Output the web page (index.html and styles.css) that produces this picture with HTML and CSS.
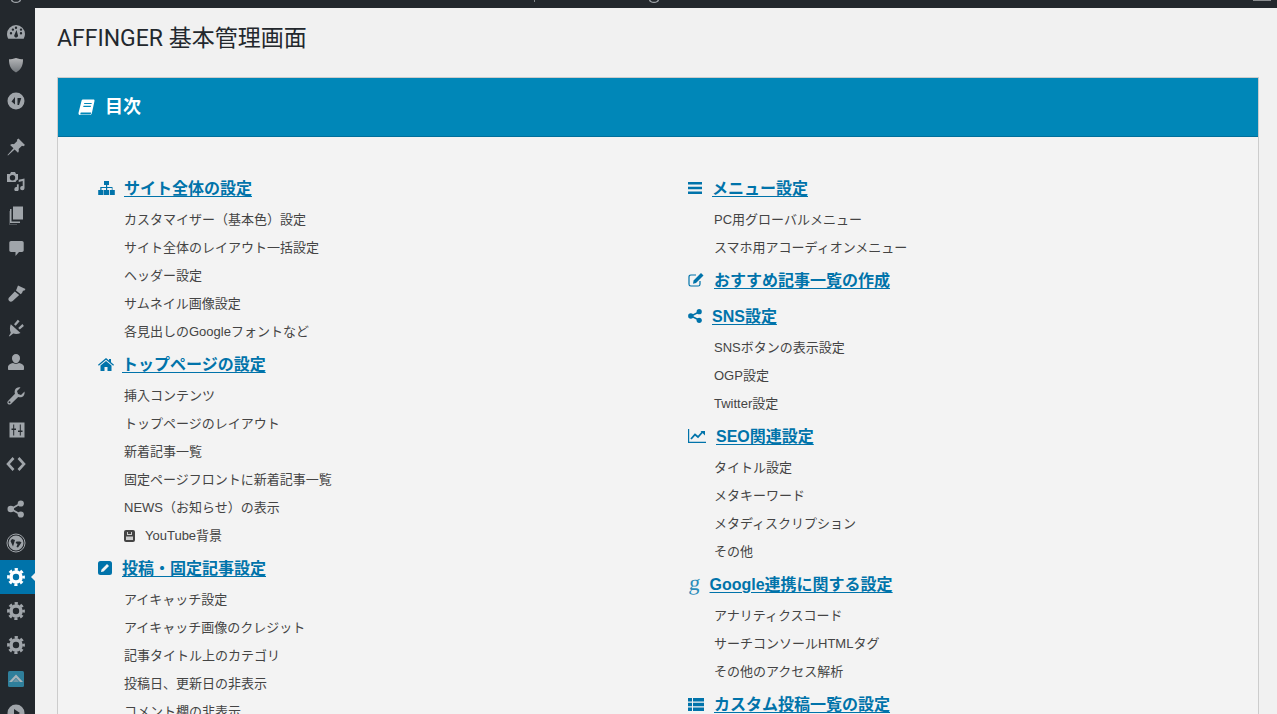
FILE: index.html
```html
<!DOCTYPE html>
<html lang="ja">
<head>
<meta charset="utf-8">
<title>AFFINGER 基本管理画面</title>
<link rel="stylesheet" href="styles.css">
</head>
<body>
<svg class="defs" width="0" height="0" aria-hidden="true">
  <symbol id="gear" viewBox="0 0 20 20">
    <circle cx="10" cy="10" r="5" fill="none" stroke="currentColor" stroke-width="3.6"/>
    <circle cx="10" cy="10" r="7.6" fill="none" stroke="currentColor" stroke-width="2.6" stroke-dasharray="3.2 2.77" stroke-dashoffset="1.6"/>
  </symbol>
</svg>
<header class="topbar">
  <svg class="tb-mark tb-a" width="12" height="3" viewBox="0 0 12 3"><path d="M1 0a5 3 0 0 0 10 0H9.500a3.500 1.800 0 0 1-7 0z" fill="#a0a5aa"/></svg>
  <span class="tb-tick"></span>
  <svg class="tb-mark tb-b" width="12" height="3" viewBox="0 0 12 3"><path d="M1 0a5 3 0 0 0 10 0H9.500a3.500 1.800 0 0 1-7 0z" fill="#a0a5aa"/></svg>
  <span class="tb-bar"></span>
</header>
<div class="shell">
  <nav class="sidebar">
    <a class="mi m-first"><svg viewBox="0 0 20 20"><path fill-rule="evenodd" d="M10 2a9 9 0 0 0-9 9c0 1.800.5 3.400 1.300 4.800h15.400A9 9 0 0 0 19 11a9 9 0 0 0-9-9zM5 11.500a1.200 1.200 0 1 1 0-2.400 1.200 1.200 0 0 1 0 2.400zm1.900-3.700a1.200 1.200 0 1 1 0-2.400 1.200 1.200 0 0 1 0 2.400zM10 6a1.200 1.200 0 1 1 0-2.400A1.200 1.200 0 0 1 10 6zm1 8.200a1.800 1.800 0 0 1-2.800-1.600L10.500 7l1.500 5.600c.2.600-.2 1.200-1 1.600zm4-6.400a1.200 1.200 0 1 1 0-2.400 1.200 1.200 0 0 1 0 2.400zm0 3.700a1.200 1.200 0 1 1 0-2.400 1.200 1.200 0 0 1 0 2.400z"/></svg></a>
    <a class="mi m-shield"><svg viewBox="0 0 20 20"><defs><linearGradient id="sh" x1="0" y1="0" x2="0" y2="1"><stop offset="0" stop-color="#b4b6b8"/><stop offset="1" stop-color="#70757a"/></linearGradient></defs><path d="M10 3c2.500 1 5 1.300 7 1.300 0 6-1.500 10-7 13.200C4.500 14.300 3 10.300 3 4.300 5 4.300 7.500 4 10 3z" fill="url(#sh)"/></svg></a>
    <a class="mi m-circle"><svg viewBox="0 0 20 20"><path fill-rule="evenodd" d="M10 1.500a8.500 8.500 0 1 0 0 17 8.500 8.500 0 0 0 0-17zM9 6v7.500L5.500 10.500zm2.500 1h3.800l-2.300 7h-1.500z"/></svg></a>
    <a class="mi m-sep"><svg viewBox="0 0 20 20"><path d="M12.500 1.500 19 8l-1.600 1.200-1.400-.4-3.400 3.200c.5 1.500.2 2.800-.6 3.800L8.600 12.400 2 18.500l-.5-.5 6-6.700-3.400-3.400c1-.8 2.300-1.100 3.800-.6L11.200 4l-.3-1.300z"/></svg></a>
    <a class="mi"><svg viewBox="0 0 20 20"><path fill-rule="evenodd" d="M1 3h3l1-2h4l1 2h2v5.500a5 5 0 0 0-2.500 2.500H1zM6.500 4a2.700 2.700 0 1 0 0 5.400 2.700 2.700 0 0 0 0-5.400z"/><path d="M18.500 7v9.500a2.200 2.200 0 1 1-1.800-2V9.500l-4 .9v7.100a2.200 2.200 0 1 1-1.800-2v-2.500l1.800-.5V8.200z" transform="translate(0 .5)"/></svg></a>
    <a class="mi"><svg viewBox="0 0 20 20"><path d="M7 1.500h10v13H7z"/><path d="M5.500 4v12.500H14V18H4V4z"/><path d="M3 6v13.500h8V19H3.500V6z" opacity=".7"/></svg></a>
    <a class="mi"><svg viewBox="0 0 20 20"><path d="M5 2h11c.9 0 1.700.8 1.700 1.700v7.600c0 .9-.8 1.700-1.700 1.700h-3l-3.500 4V13H5c-.9 0-1.700-.8-1.700-1.700V3.700C3.300 2.800 4.100 2 5 2z"/></svg></a>
    <a class="mi m-sep2"><svg viewBox="0 0 20 20"><path d="M12 2.500 19.500 6l-1 1.500-1.500.2-1 2.300-1.300 1.200-4.700-3.800zM8.800 8.400l4.400 3.600-6.500 6c-1.200 1-2.700.9-3.700-.2-.9-1.100-.8-2.500.3-3.500z"/></svg></a>
    <a class="mi m-plus1"><svg viewBox="0 0 20 20"><path d="M4.800 6.300 14.500 15c-2.300 1.200-5.400 1.200-7.300.5l-3.500 2.800-.9-.1 2-3.500c-1.200-2.500-1.100-5.700 0-8.400zM8 6.200l3.800-4.400 1.800 1.500-3.900 4.400zM12.200 9.900l4.200-3.800 1.500 1.800-4.100 3.700z"/></svg></a>
    <a class="mi"><svg viewBox="0 0 20 20"><path d="M10 2a4 4 0 0 1 4 4.200c0 2.400-1.800 4.800-4 4.800S6 8.600 6 6.200A4 4 0 0 1 10 2zm-3 9c1 1 4.800 1 6 0 2.500.7 4.500 1.500 5 3.500V17c0 .6-.5 1-1 1H3c-.6 0-1-.4-1-1v-2.500c.5-2 2.500-2.800 5-3.500z"/></svg></a>
    <a class="mi"><svg viewBox="0 0 20 20"><path fill-rule="evenodd" d="M18.500 5.500 15 9l-3-1-1-3 3.500-3.500C12 1 9.800 2 9 4c-.5 1.300-.4 2.700 0 3.800l-7 7.200c-.9 1-.9 2.200 0 3 .9.800 2 .8 3 0l7.200-7c1.200.4 2.500.5 3.800 0 2-.8 3-3.200 2.500-5.500zM3.500 17.300a1 1 0 1 1 0-2 1 1 0 0 1 0 2z"/></svg></a>
    <a class="mi"><svg viewBox="0 0 20 20"><path fill-rule="evenodd" d="M3.500 2.500h15v15h-15zM7.200 4.500v4H5.500V10h1.700v5.500h1V10H10V8.500H8.200v-4zm6.600 0v6H12V12h1.800v3.500h1V12h1.700v-1.500h-1.700v-6z"/></svg></a>
    <a class="mi"><svg viewBox="0 0 20 20"><path fill="none" stroke="currentColor" stroke-width="2.600" d="M7.500 4 2 10l5.500 6M12.500 4l5.500 6-5.500 6"/></svg></a>
    <a class="mi m-sep3"><svg viewBox="0 0 20 20"><path fill="none" stroke="currentColor" stroke-width="1.800" d="M14.500 4.500 5 10l9.500 5.500"/><circle cx="4.800" cy="10" r="3.300"/><circle cx="14.800" cy="4.500" r="3.100"/><circle cx="14.800" cy="15.500" r="3.100"/></svg></a>
    <a class="mi"><svg viewBox="0 0 20 20"><circle cx="10" cy="10" r="9" fill="none" stroke="currentColor" stroke-width="1"/><path fill-rule="evenodd" d="M10 2.500a7.500 7.500 0 1 0 0 15 7.500 7.500 0 0 0 0-15zM6 6l3 1-2 6.500L4.500 8zm4.500 2.500H14l1.500 1-3.500 5-1.500-.5 1-3-2-1z"/></svg></a>
    <a class="mi mi-active"><svg viewBox="0 0 20 20"><use href="#gear"/></svg><span class="arrow"></span></a>
    <a class="mi"><svg viewBox="0 0 20 20"><use href="#gear"/></svg></a>
    <a class="mi"><svg viewBox="0 0 20 20"><use href="#gear"/></svg></a>
    <a class="mi"><svg viewBox="0 0 20 20"><rect x="2" y="2" width="16" height="16" rx="1.500" fill="#2f7f9b"/><path d="M10 5.500 17 13h-3l-4-4.200L6 13H3z" fill="#a8b4ba"/><path d="M10 9.500 13 13H7z" fill="#6f96a6"/></svg></a>
    <a class="mi"><svg viewBox="0 0 20 20"><path fill-rule="evenodd" d="M10 1.500a8.500 8.500 0 1 0 0 17 8.500 8.500 0 0 0 0-17zM8 6l6 4-6 4z"/></svg></a>
  </nav>
  <main class="content">
    <h1 class="page-title">AFFINGER 基本管理画面</h1>
    <section class="panel">
      <div class="panel-head">
        <svg width="17" height="17" viewBox="0 0 17 15" preserveAspectRatio="none"><path fill-rule="evenodd" d="M5 .5h10.500c.8 0 1.200.6 1 1.300l-2.600 10.500c-.3 1.200-1 1.700-2 1.700H2.500C1 14.500.2 13.500.6 12L3.500 1.800C3.700 1 4.200.5 5 .5zm1.300 3-.3 1h7.500l.3-1zm-.8 2.500-.3 1h7.500l.3-1zM2.500 12.400c-.3.800.1 1.100.7 1.100H12c.5 0 .8-.2 1-.7l.2-.9H3.500c-.5 0-.8.100-1 .5z" fill="#fff"/></svg>
        <h2 class="panel-title">目次</h2>
      </div>
      <div class="panel-body">
        <div class="col">
          <div class="sec"><svg class="hi hi-a" width="17" height="14" viewBox="0 0 17 14"><path d="M6 0h5v4H9.200v2H14.500v3H16.800v5h-5V9h2V7H9.200v2H11v5H6V9h2V7H3.500v2h2v5H.2V9h2.100V6H8V4H6z"/></svg><a class="sec-link">サイト全体の設定</a></div>
          <div class="item">カスタマイザー（基本色）設定</div>
          <div class="item">サイト全体のレイアウト一括設定</div>
          <div class="item">ヘッダー設定</div>
          <div class="item">サムネイル画像設定</div>
          <div class="item">各見出しのGoogleフォントなど</div>
          <div class="sec"><svg class="hi hi-b" width="16" height="13" viewBox="0 0 16 13"><path d="M8 0l3 2.500V1h2v3.200L16 6.800l-.8.900L8 1.800.8 7.700 0 6.800zM8 3l5.500 4.500V13H9.500V9h-3v4H2.500V7.500z"/></svg><a class="sec-link">トップページの設定</a></div>
          <div class="item">挿入コンテンツ</div>
          <div class="item">トップページのレイアウト</div>
          <div class="item">新着記事一覧</div>
          <div class="item">固定ページフロントに新着記事一覧</div>
          <div class="item">NEWS（お知らせ）の表示</div>
          <div class="item item-yt"><svg width="11" height="12" viewBox="0 0 11 12"><rect width="11" height="12" rx="2" fill="#444"/><path d="M3 2h1v2h3V2h1v3H3zM2 6.500h7V10H2z" fill="#ccc"/></svg><span>YouTube背景</span></div>
          <div class="sec"><svg class="hi hi-c" width="14" height="14" viewBox="0 0 14 14"><path fill-rule="evenodd" d="M2.500 0h9A2.500 2.500 0 0 1 14 2.500v9a2.500 2.500 0 0 1-2.500 2.500h-9A2.500 2.500 0 0 1 0 11.500v-9A2.500 2.500 0 0 1 2.500 0zM9 3 3.500 8.500 3 11l2.500-.5L11 5z"/></svg><a class="sec-link">投稿・固定記事設定</a></div>
          <div class="item">アイキャッチ設定</div>
          <div class="item">アイキャッチ画像のクレジット</div>
          <div class="item">記事タイトル上のカテゴリ</div>
          <div class="item">投稿日、更新日の非表示</div>
          <div class="item">コメント欄の非表示</div>
        </div>
        <div class="col">
          <div class="sec"><svg class="hi hi-a2" width="14" height="12" viewBox="0 0 14 12"><path d="M0 0h14v2.400H0zM0 4.800h14v2.400H0zM0 9.600h14V12H0z"/></svg><a class="sec-link">メニュー設定</a></div>
          <div class="item">PC用グローバルメニュー</div>
          <div class="item">スマホ用アコーディオンメニュー</div>
          <div class="sec"><svg class="hi hi-b2" width="16" height="14" viewBox="0 0 16 14"><path d="M12 8v3.200A1.800 1.800 0 0 1 10.200 13H2.800A1.800 1.800 0 0 1 1 11.200V3.800A1.800 1.800 0 0 1 2.800 2H8" fill="none" stroke="currentColor" stroke-width="1.200"/><path d="M13 0l2.500 2.500L8 10l-3 .7.600-3.100z"/></svg><a class="sec-link">おすすめ記事一覧の作成</a></div>
          <div class="sec"><svg class="hi hi-a2" width="14" height="14" viewBox="0 0 14 14"><path d="M11 3 3 7l8 4" fill="none" stroke="currentColor" stroke-width="1.500"/><circle cx="2.800" cy="7" r="2.700"/><circle cx="11.200" cy="2.700" r="2.600"/><circle cx="11.200" cy="11.300" r="2.600"/></svg><a class="sec-link">SNS設定</a></div>
          <div class="item">SNSボタンの表示設定</div>
          <div class="item">OGP設定</div>
          <div class="item">Twitter設定</div>
          <div class="sec"><svg class="hi hi-d" width="18" height="14" viewBox="0 0 18 14"><path d="M.6 0v13.400H18" fill="none" stroke="currentColor" stroke-width="1.200"/><path d="m3 10 4-4.500 3 2.500 4.500-5" fill="none" stroke="currentColor" stroke-width="1.800"/><path d="M12.500 2H17v4.500z"/></svg><a class="sec-link">SEO関連設定</a></div>
          <div class="item">タイトル設定</div>
          <div class="item">メタキーワード</div>
          <div class="item">メタディスクリプション</div>
          <div class="item">その他</div>
          <div class="sec"><span class="hi-g">g</span><a class="sec-link">Google連携に関する設定</a></div>
          <div class="item">アナリティクスコード</div>
          <div class="item">サーチコンソールHTMLタグ</div>
          <div class="item">その他のアクセス解析</div>
          <div class="sec"><svg class="hi hi-b2" width="16" height="13" viewBox="0 0 16 13"><path d="M0 0h4v3.600H0zM5 0h11v3.600H5zM0 4.700h4v3.600H0zM5 4.700h11v3.600H5zM0 9.400h4V13H0zM5 9.400h11V13H5z"/></svg><a class="sec-link">カスタム投稿一覧の設定</a></div>
        </div>
      </div>
    </section>
  </main>
</div>
</body>
</html>
```
FILE: styles.css
```css
* { box-sizing: border-box; }
html, body { margin: 0; height: 100%; overflow: hidden; }
body {
  background: #f1f1f1;
  font-family: "Liberation Sans", "Noto Sans CJK JP", sans-serif;
  color: #444;
  display: flex;
  flex-direction: column;
}
.defs { position: absolute; }

.topbar { height: 8px; flex: none; background: #23282d; position: relative; }
.tb-mark { position: absolute; top: 0; display: block; }
.tb-a { left: 10px; }
.tb-b { left: 648px; }
.tb-tick { position: absolute; left: 534px; top: 0; width: 1px; height: 2px; background: #80858a; }
.tb-bar { position: absolute; left: 1253px; top: 0; width: 18px; height: 1px; background: #8a8d90; }

.shell { flex: 1; display: flex; min-height: 0; }

.sidebar { width: 35px; flex: none; background: #23282d; overflow: hidden; }
.mi {
  display: flex;
  align-items: center;
  justify-content: center;
  height: 34px;
  color: #a0a5aa;
  position: relative;
}
.mi svg { width: 20px; height: 20px; fill: currentColor; display: block; margin-left: -4px; }
.m-first { margin-top: 8px; height: 34px; }
.m-shield { margin-top: -2px; }
.m-circle { margin-top: 2px; }
.m-sep { margin-top: 12px; }
.m-sep2 { margin-top: 10px; }
.m-plus1 { margin-top: 1px; }
.m-sep3 { margin-top: 11px; }
.mi-active { background: #0073aa; color: #fff; }
.arrow {
  position: absolute;
  right: 0;
  top: 50%;
  margin-top: -4px;
  border: 4px solid transparent;
  border-left-width: 0;
  border-right-color: #f1f1f1;
}

.content { flex: 1; min-width: 0; padding: 0 18px 0 22px; }
.page-title {
  margin: 0;
  height: 69px;
  padding-top: 15px;
  font-family: Roboto, "Noto Sans CJK JP", sans-serif;
  font-size: 23px;
  line-height: 32px;
  font-weight: 400;
  color: #23282d;
}
.panel { border: 1px solid #ccc; background: #f3f3f3; }
.panel-head {
  height: 59px;
  background: #0087b8;
  border-bottom: 1px solid #006f9b;
  display: flex;
  align-items: center;
  padding-left: 20px;
  color: #fff;
}
.panel-title { margin: 0 0 0 10px; font-size: 18px; font-weight: 700; line-height: 24px; }
.panel-body {
  display: grid;
  grid-template-columns: 590px 1fr;
  padding: 33px 0 0 40px;
}
.sec {
  height: 36px;
  display: flex;
  align-items: center;
  color: #0073aa;
}
.hi { fill: currentColor; display: block; flex: none; }
.hi-a { margin-right: 9px; }
.hi-b { margin-right: 9px; }
.hi-c { margin-right: 10px; }
.hi-a2 { margin-right: 10px; }
.hi-b2 { margin-right: 10px; }
.hi-d { margin-right: 10px; }
.hi-g {
  font-family: "Liberation Serif", serif;
  font-size: 22px;
  line-height: 22px;
  width: 21.500px;
  padding: 0 0 3px 1px;
  flex: none;
  color: #2a8cba;
  transform: skewX(-6deg);
}
.sec-link {
  padding-top: 2px;
  font-size: 16px;
  font-weight: 700;
  line-height: 22px;
  color: #0073aa;
  text-decoration: underline;
  text-underline-offset: 2px;
}
.hi-b + .sec-link { margin-left: -1px; }
.item {
  height: 28px;
  padding-left: 26px;
  font-size: 13px;
  line-height: 28px;
  color: #444;
  white-space: nowrap;
}
.item-yt { display: flex; align-items: center; }
.item-yt svg { display: block; margin-right: 10px; }
```
